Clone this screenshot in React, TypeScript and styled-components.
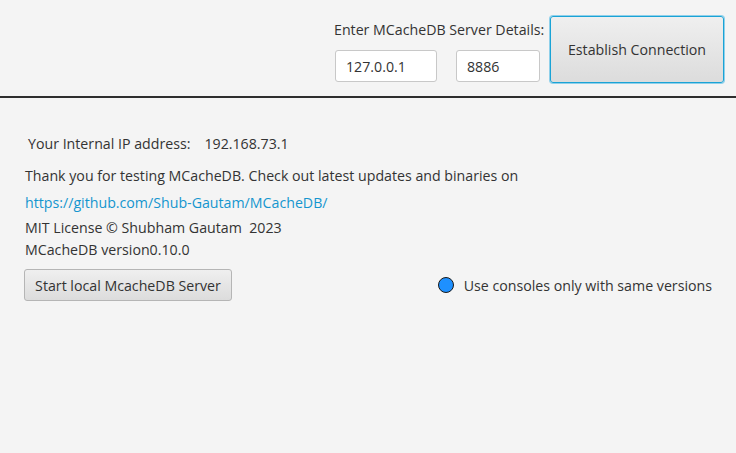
import styled, { createGlobalStyle } from "styled-components";

const GlobalStyle = createGlobalStyle`
	html, body {
		margin: 0;
		padding: 0;
		background: #f4f4f4;
	}
	body {
		font-family: "Open Sans", "Noto Sans", sans-serif;
		font-size: 14.2px;
		color: #333333;
	}
`;

const Window = styled.div`
	width: 736px;
	height: 453px;
	background: #f4f4f4;
	overflow: hidden;
`;

const Header = styled.div`
	display: flex;
	justify-content: flex-end;
	align-items: flex-start;
	padding-right: 12px;
	border-bottom: 2px solid #2e2e2e;
	box-sizing: border-box;
	height: 98px;
`;

const ServerColumn = styled.div`
	display: flex;
	flex-direction: column;
	width: 209px;
	margin-top: 20px;
	margin-right: 7px;
`;

const Label = styled.div`
	line-height: 20px;
	height: 20px;
	white-space: nowrap;
`;

const FieldRow = styled.div`
	display: flex;
	gap: 19px;
	margin-top: 10px;
	padding-left: 1px;
`;

const Field = styled.input<{ $w: number }>`
	width: ${(p) => p.$w}px;
	height: 32px;
	box-sizing: border-box;
	border: 1px solid #c8c8c8;
	border-radius: 3px;
	background: #ffffff;
	padding: 0 10px;
	font: inherit;
	color: #333333;
	outline: none;
`;

const Button = styled.button<{ $focused?: boolean }>`
	font: inherit;
	color: #333333;
	border-radius: 3px;
	background: linear-gradient(#efefef, #dcdcdc);
	border: 1px solid ${(p) => (p.$focused ? "#1aa3d6" : "#b5b5b5")};
	box-shadow: ${(p) => (p.$focused ? "0 0 0 1px #8fd0ea" : "none")};
	padding: 0 10px;
	cursor: pointer;
	white-space: nowrap;
`;

const ConnectButton = styled(Button)`
	width: 174px;
	height: 67px;
	margin-top: 16px;
`;

const Body = styled.div`
	padding: 34px 24px 0 25px;
	display: flex;
	flex-direction: column;
`;

const IpRow = styled.div`
	display: flex;
	gap: 14px;
	padding-left: 3px;
	line-height: 24px;
	margin-bottom: 7px;
`;

const Line = styled.div<{ $h: number }>`
	line-height: ${(p) => p.$h}px;
	white-space: nowrap;
`;

const Link = styled.a`
	color: #1496cf;
	text-decoration: none;
	line-height: 27px;
`;

const BottomRow = styled.div`
	display: flex;
	justify-content: space-between;
	align-items: center;
	margin-top: 9px;
`;

const LocalButton = styled(Button)`
	width: 208px;
	height: 32px;
	margin-left: -1px;
`;

const Notice = styled.div`
	display: flex;
	align-items: center;
	gap: 10px;
`;

const Dot = styled.span`
	width: 14px;
	height: 14px;
	border-radius: 50%;
	background: #1e90ff;
	border: 1.5px solid #1a1a1a;
`;

export default function App() {
	return (
		<Window>
			<GlobalStyle />
			<Header>
				<ServerColumn>
					<Label>Enter MCacheDB Server Details:</Label>
					<FieldRow>
						<Field $w={102} defaultValue="127.0.0.1" />
						<Field $w={84} defaultValue="8886" />
					</FieldRow>
				</ServerColumn>
				<ConnectButton $focused>Establish Connection</ConnectButton>
			</Header>
			<Body>
				<IpRow>
					<span>Your Internal IP address:</span>
					<span>192.168.73.1</span>
				</IpRow>
				<Line $h={26}>
					Thank you for testing MCacheDB. Check out latest updates and binaries on
				</Line>
				<Link href="#">https://github.com/Shub-Gautam/MCacheDB/</Link>
				<Line $h={24}>MIT License © Shubham Gautam&nbsp; 2023</Line>
				<Line $h={20}>MCacheDB version0.10.0</Line>
				<BottomRow>
					<LocalButton>Start local McacheDB Server</LocalButton>
					<Notice>
						<Dot />
						<span>Use consoles only with same versions</span>
					</Notice>
				</BottomRow>
			</Body>
		</Window>
	);
}
